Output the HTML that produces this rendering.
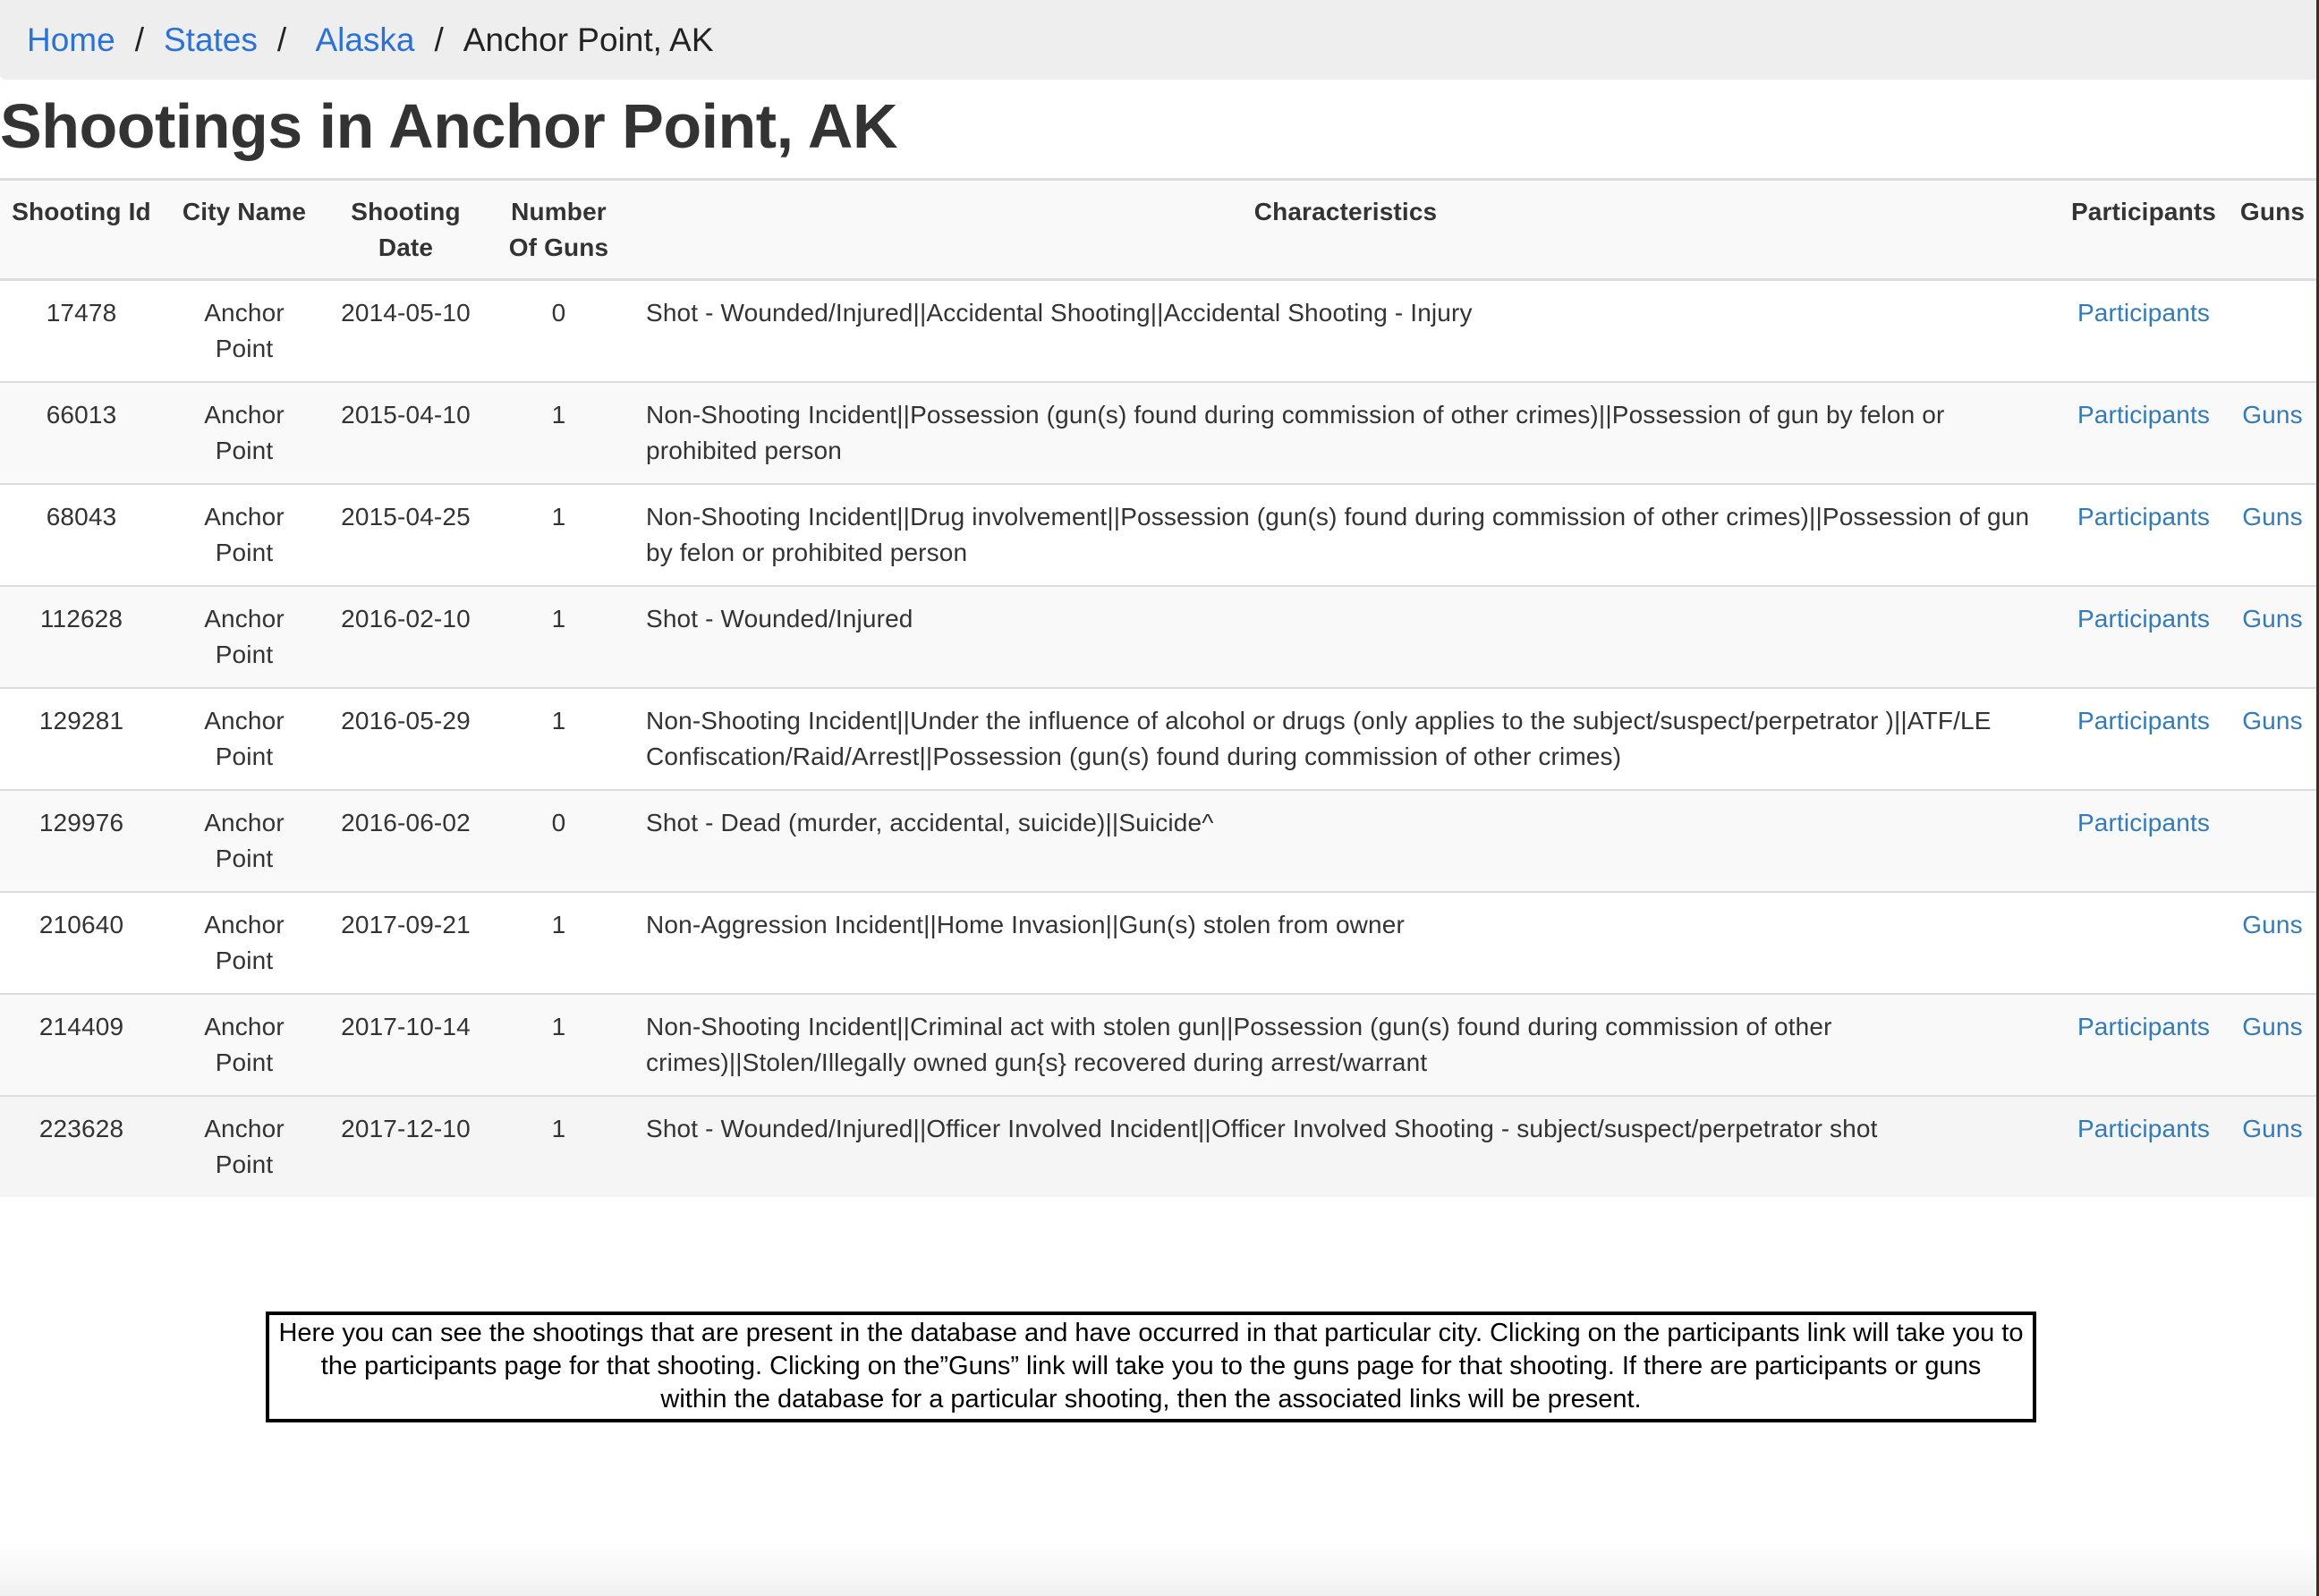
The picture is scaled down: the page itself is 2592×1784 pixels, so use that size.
<!DOCTYPE html>
<html><head><meta charset="utf-8"><style>
html,body{margin:0;padding:0;background:#fff;width:2592px;height:1784px;overflow:hidden;font-family:"Liberation Sans",Arial,sans-serif;color:#333}
.bc{height:89px;background:#eeeeee;border-radius:0 0 6px 6px;font-size:37px;line-height:89px;padding-left:30px;box-sizing:border-box;color:#222}
.bc a{color:#2a72d8;text-decoration:none}
.bc .s{padding:0 22px;color:#222}
h1{margin:0;font-size:70px;font-weight:bold;line-height:100px;height:108px;padding-top:2px;color:#333;letter-spacing:-0.5px}
table{border-collapse:collapse;table-layout:fixed;width:2590px;font-size:28px;line-height:40px;border-top:3px solid #ddd;letter-spacing:0.15px}
th,td{padding:16px 10px;vertical-align:top;border-top:2px solid #ddd}
th{background:#f9f9f9;font-weight:bold;text-align:center;padding-top:15px;padding-bottom:14px}
thead tr th{border-bottom:3px solid #ddd;border-top:none}
td.c{text-align:center}
td.l{text-align:left;padding-left:16px;padding-right:10px;white-space:nowrap;overflow:hidden}
td a{color:#337ab7;text-decoration:none}
tbody tr:nth-child(even){background:#f9f9f9}
tbody tr:last-child{background:#f5f5f5}
.box{position:absolute;left:297px;top:1466px;width:1979px;height:124px;box-sizing:border-box;border:4px solid #000;font-size:29px;line-height:37px;text-align:center;color:#000;padding:2px 4px}
.edge{position:absolute;right:0;top:0;width:3px;height:1784px;background:#3a2f28}
.bot{position:absolute;left:0;bottom:0;width:2592px;height:60px;background:linear-gradient(#fff,#f1f1f1)}
</style></head><body>
<div class="bc"><a>Home</a><span class="s">/</span><a>States</a><span class="s">/ </span> <a>Alaska</a><span class="s">/</span>Anchor Point, AK</div>
<h1>Shootings in Anchor Point, AK</h1>
<table>
<colgroup><col style="width:182px"><col style="width:182px"><col style="width:179px"><col style="width:163px"><col style="width:1596px"><col style="width:188px"><col style="width:100px"></colgroup>
<thead><tr><th>Shooting Id</th><th>City Name</th><th>Shooting<br>Date</th><th>Number<br>Of Guns</th><th>Characteristics</th><th>Participants</th><th>Guns</th></tr></thead>
<tbody>
<tr><td class="c">17478</td><td class="c">Anchor<br>Point</td><td class="c">2014-05-10</td><td class="c">0</td><td class="l">Shot - Wounded/Injured||Accidental Shooting||Accidental Shooting - Injury</td><td class="c"><a>Participants</a></td><td class="c"></td></tr>
<tr><td class="c">66013</td><td class="c">Anchor<br>Point</td><td class="c">2015-04-10</td><td class="c">1</td><td class="l">Non-Shooting Incident||Possession (gun(s) found during commission of other crimes)||Possession of gun by felon or<br>prohibited person</td><td class="c"><a>Participants</a></td><td class="c"><a>Guns</a></td></tr>
<tr><td class="c">68043</td><td class="c">Anchor<br>Point</td><td class="c">2015-04-25</td><td class="c">1</td><td class="l">Non-Shooting Incident||Drug involvement||Possession (gun(s) found during commission of other crimes)||Possession of gun<br>by felon or prohibited person</td><td class="c"><a>Participants</a></td><td class="c"><a>Guns</a></td></tr>
<tr><td class="c">112628</td><td class="c">Anchor<br>Point</td><td class="c">2016-02-10</td><td class="c">1</td><td class="l">Shot - Wounded/Injured</td><td class="c"><a>Participants</a></td><td class="c"><a>Guns</a></td></tr>
<tr><td class="c">129281</td><td class="c">Anchor<br>Point</td><td class="c">2016-05-29</td><td class="c">1</td><td class="l">Non-Shooting Incident||Under the influence of alcohol or drugs (only applies to the subject/suspect/perpetrator )||ATF/LE<br>Confiscation/Raid/Arrest||Possession (gun(s) found during commission of other crimes)</td><td class="c"><a>Participants</a></td><td class="c"><a>Guns</a></td></tr>
<tr><td class="c">129976</td><td class="c">Anchor<br>Point</td><td class="c">2016-06-02</td><td class="c">0</td><td class="l">Shot - Dead (murder, accidental, suicide)||Suicide^</td><td class="c"><a>Participants</a></td><td class="c"></td></tr>
<tr><td class="c">210640</td><td class="c">Anchor<br>Point</td><td class="c">2017-09-21</td><td class="c">1</td><td class="l">Non-Aggression Incident||Home Invasion||Gun(s) stolen from owner</td><td class="c"></td><td class="c"><a>Guns</a></td></tr>
<tr><td class="c">214409</td><td class="c">Anchor<br>Point</td><td class="c">2017-10-14</td><td class="c">1</td><td class="l">Non-Shooting Incident||Criminal act with stolen gun||Possession (gun(s) found during commission of other<br>crimes)||Stolen/Illegally owned gun{s} recovered during arrest/warrant</td><td class="c"><a>Participants</a></td><td class="c"><a>Guns</a></td></tr>
<tr><td class="c">223628</td><td class="c">Anchor<br>Point</td><td class="c">2017-12-10</td><td class="c">1</td><td class="l">Shot - Wounded/Injured||Officer Involved Incident||Officer Involved Shooting - subject/suspect/perpetrator shot</td><td class="c"><a>Participants</a></td><td class="c"><a>Guns</a></td></tr>
</tbody></table>
<div class="bot"></div>
<div class="box">Here you can see the shootings that are present in the database and have occurred in that particular city. Clicking on the participants link will take you to the participants page for that shooting. Clicking on the”Guns” link will take you to the guns page for that shooting. If there are participants or guns<br>within the database for a particular shooting, then the associated links will be present.</div>
<div class="edge"></div>
</body></html>
